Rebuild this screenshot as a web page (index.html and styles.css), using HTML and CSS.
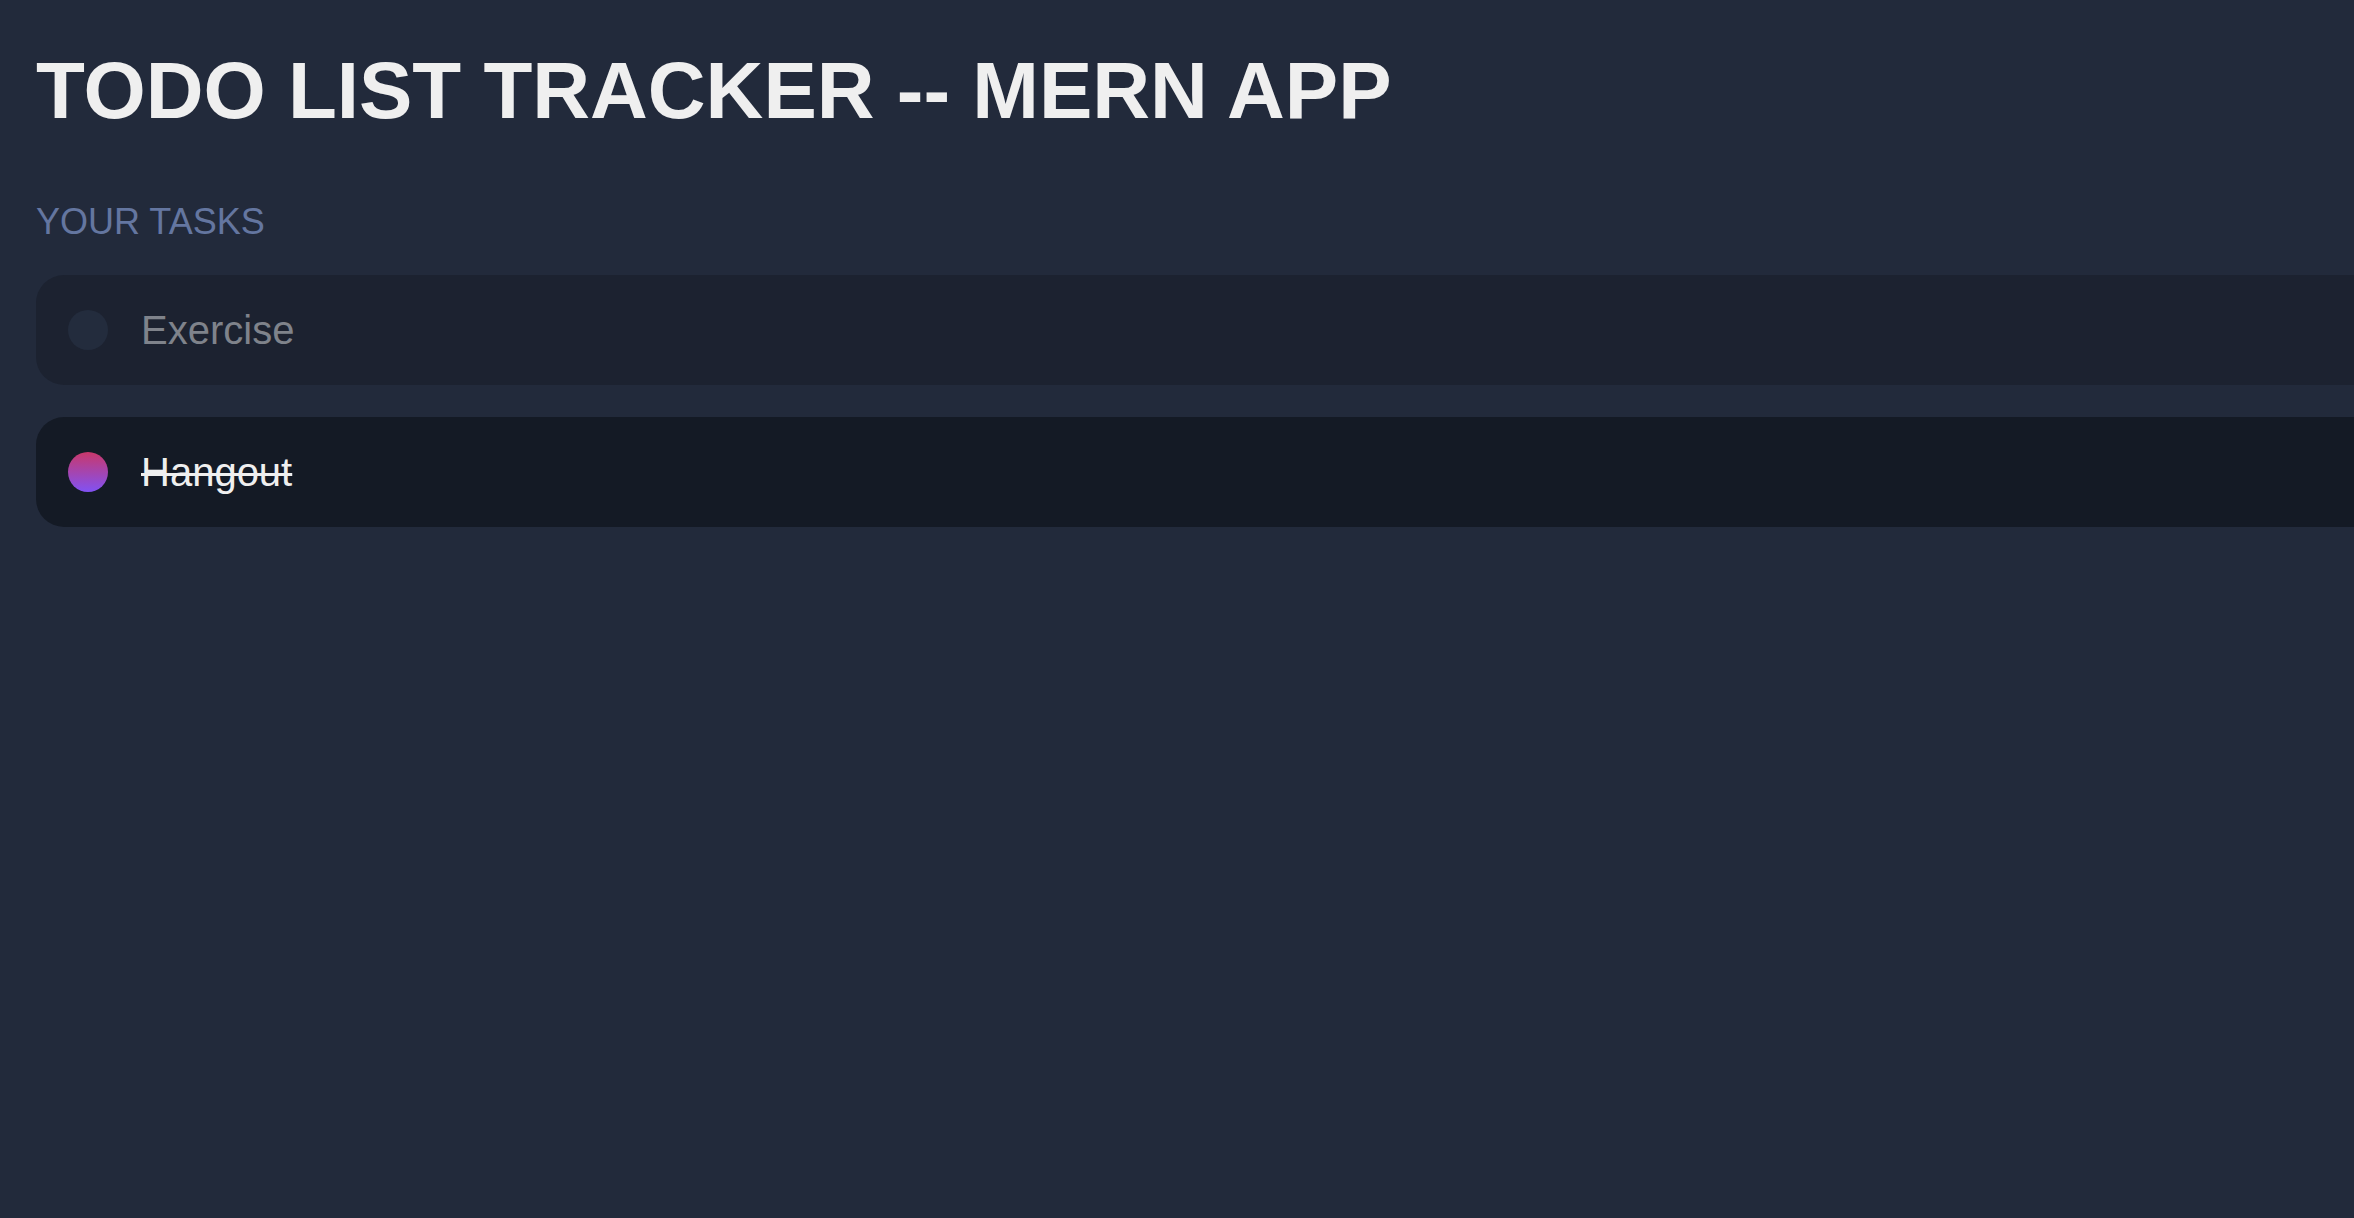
FILE: index.html
```html
<!DOCTYPE html>
<html lang="en">
<head>
<meta charset="utf-8">
<title>Todo List Tracker</title>
<link rel="stylesheet" href="styles.css">
</head>
<body>
<main class="app">
  <h1 class="title">TODO LIST TRACKER -- MERN APP</h1>
  <h2 class="section-label">YOUR TASKS</h2>
  <ul class="tasks">
    <li class="task">
      <span class="check"></span>
      <span class="task-text">Exercise</span>
    </li>
    <li class="task task-done">
      <span class="check check-done"></span>
      <span class="task-text">Hangout</span>
    </li>
  </ul>
</main>
</body>
</html>
```
FILE: styles.css
```css
html, body {
  margin: 0;
  padding: 0;
  overflow: hidden;
}

body {
  background: #222a3b;
  font-family: "Liberation Sans", Arial, Helvetica, sans-serif;
  min-height: 100vh;
}

.app {
  padding: 45px 0 36px 36px;
}

.title {
  margin: 0;
  font-size: 80px;
  line-height: 92px;
  font-weight: 700;
  color: #efefef;
}

.section-label {
  margin: 64px 0 0;
  font-size: 36px;
  line-height: 41px;
  font-weight: 400;
  color: #6476a0;
}

.tasks {
  list-style: none;
  margin: 33px -200px 0 0;
  padding: 0;
  display: flex;
  flex-direction: column;
  gap: 32px;
}

.task {
  height: 110px;
  box-sizing: border-box;
  display: flex;
  align-items: center;
  gap: 33px;
  padding-left: 32px;
  border-radius: 28px;
  background: #1c2230;
}

.task-done {
  background: #141a25;
}

.check {
  flex: none;
  width: 40px;
  height: 40px;
  border-radius: 50%;
  background: #232c3d;
}

.check-done {
  background: linear-gradient(to bottom, #c9386a, #8152f4);
}

.task-text {
  font-size: 40px;
  line-height: 46px;
  color: #7f838b;
}

.task-done .task-text {
  color: #efefef;
  text-decoration: line-through;
  text-decoration-thickness: 3px;
}
```
